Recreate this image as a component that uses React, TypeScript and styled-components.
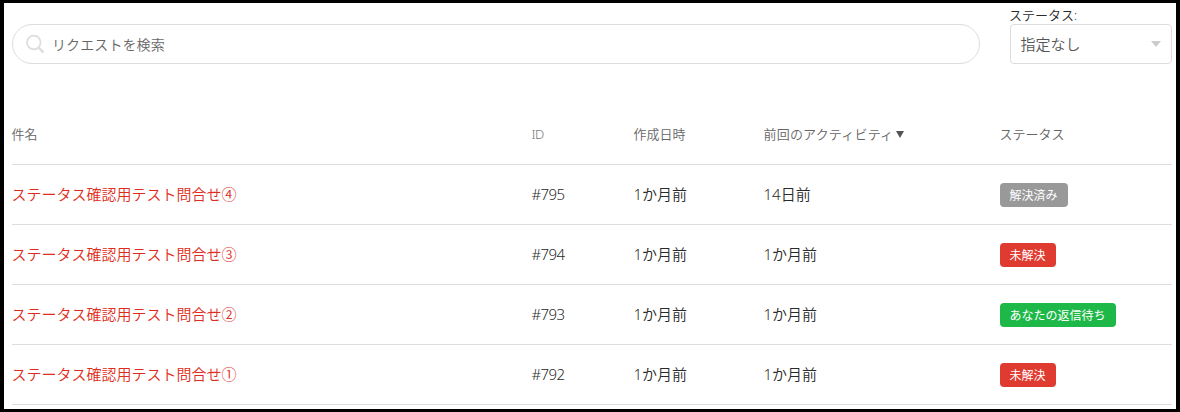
import React from "react";
import styled, { createGlobalStyle } from "styled-components";

const GlobalStyle = createGlobalStyle`
  *, *::before, *::after { box-sizing: border-box; }
  body {
    margin: 0;
    background: #fff;
    color: #2a2a2a;
    font-family: "Noto Sans", "Noto Sans CJK JP", sans-serif;
    font-size: 15px;
    font-weight: 350;
  }
`;

const Page = styled.main`
  height: 412px;
  overflow: hidden;
  border: solid #000;
  border-width: 3px 4px;
  padding: 3px 4px 0 8px;
`;

const Toolbar = styled.div`
  display: flex;
  align-items: flex-end;
  justify-content: space-between;
  height: 58px;
`;

const SearchBox = styled.label`
  display: flex;
  align-items: center;
  width: 968px;
  height: 40px;
  padding-left: 13px;
  border: 1px solid #ddd;
  border-radius: 20px;
`;

const SearchIcon = styled.svg`
  flex: none;
  width: 19px;
  height: 20px;
  margin-right: 7px;
`;

const SearchInput = styled.input`
  flex: 1;
  height: 36px;
  padding: 0;
  border: 0;
  outline: 0;
  background: transparent;
  font: 350 14px "Noto Sans CJK JP", sans-serif;
  letter-spacing: 0.1px;
  &::placeholder {
    color: #666;
    opacity: 1;
  }
`;

const Filter = styled.div`
  display: flex;
  flex-direction: column;
  width: 162px;
`;

const FilterLabel = styled.span`
  height: 18px;
  font-size: 13px;
  line-height: 18px;
  text-indent: -1px;
`;

const FilterButton = styled.button`
  display: flex;
  align-items: center;
  justify-content: space-between;
  height: 40px;
  padding: 0 10px 1px 9.5px;
  border: 1px solid #ddd;
  border-radius: 4px;
  background: #fff;
  color: #555;
  font: inherit;
`;

const Caret = styled.span`
  border: 5px solid transparent;
  border-top: 6px solid #ccc;
  border-bottom: 0;
`;

const Table = styled.table`
  width: 1160px;
  margin-top: 40px;
  border-collapse: separate;
  border-spacing: 0;
  table-layout: fixed;
`;

const Column = styled.col<{ $width: number }>`
  width: ${(p) => p.$width}px;
`;

const HeadCell = styled.th<{ $latin?: boolean; $spacing?: number }>`
  height: 61px;
  padding: 0;
  border-bottom: 1px solid #ddd;
  color: ${(p) => (p.$latin ? "#777" : "#666")};
  font-size: 13px;
  font-weight: ${(p) => (p.$latin ? 300 : 350)};
  letter-spacing: ${(p) => p.$spacing ?? 0}px;
  line-height: 20px;
  text-align: left;
  text-indent: -0.5px;
  white-space: nowrap;
`;

const SortArrow = styled.span`
  display: inline-block;
  margin-left: 3px;
  border: 4.5px solid transparent;
  border-top: 7px solid #555;
  border-bottom: 0;
  vertical-align: 1px;
`;

const Cell = styled.td<{ $tight?: boolean }>`
  height: 60px;
  padding: 0 0 2px;
  border-bottom: 1px solid #ddd;
  letter-spacing: ${(p) => (p.$tight ? "-0.6px" : "normal")};
  line-height: 20px;
  text-indent: -0.5px;
  white-space: nowrap;
`;

const StatusCell = styled(Cell)`
  padding-bottom: 0;
`;

const RequestLink = styled.a`
  color: #de2d20;
  font-family: "Noto Sans CJK JP", sans-serif;
  text-decoration: none;
`;

const badgeColors = { solved: "#999", open: "#e03b30", answered: "#1eb848" };
type Status = keyof typeof badgeColors;

const Badge = styled.span<{ $status: Status }>`
  display: block;
  width: fit-content;
  height: 24px;
  padding: 0 10.5px 0 10px;
  border-radius: 4px;
  background: ${(p) => badgeColors[p.$status]};
  color: #fff;
  font-size: 12px;
  font-weight: 400;
  line-height: 26px;
`;

const labels: Record<Status, string> = {
  solved: "解決済み",
  open: "未解決",
  answered: "あなたの返信待ち",
};

const requests: { title: string; id: string; created: string; active: string; status: Status }[] = [
  { title: "ステータス確認用テスト問合せ④", id: "#795", created: "1か月前", active: "14日前", status: "solved" },
  { title: "ステータス確認用テスト問合せ③", id: "#794", created: "1か月前", active: "1か月前", status: "open" },
  { title: "ステータス確認用テスト問合せ②", id: "#793", created: "1か月前", active: "1か月前", status: "answered" },
  { title: "ステータス確認用テスト問合せ①", id: "#792", created: "1か月前", active: "1か月前", status: "open" },
];

export default function App() {
  return (
    <Page>
      <GlobalStyle />
      <Toolbar>
        <SearchBox>
          <SearchIcon viewBox="0 0 19 20" fill="none" stroke="#ddd" strokeWidth="1.8">
            <circle cx="7.8" cy="8.5" r="6.8" />
            <path d="M12.4 13.4 17.6 18.6" strokeWidth="2.2" />
          </SearchIcon>
          <SearchInput placeholder="リクエストを検索" />
        </SearchBox>
        <Filter>
          <FilterLabel>ステータス:</FilterLabel>
          <FilterButton>
            指定なし
            <Caret />
          </FilterButton>
        </Filter>
      </Toolbar>
      <Table>
        <colgroup>
          <Column $width={520} />
          <Column $width={102} />
          <Column $width={130} />
          <Column $width={236} />
          <Column $width={172} />
        </colgroup>
        <thead>
          <tr>
            <HeadCell>件名</HeadCell>
            <HeadCell $latin $spacing={-0.5}>ID</HeadCell>
            <HeadCell>作成日時</HeadCell>
            <HeadCell $spacing={0.2}>
              前回のアクティビティ
              <SortArrow />
            </HeadCell>
            <HeadCell>ステータス</HeadCell>
          </tr>
        </thead>
        <tbody>
          {requests.map((r) => (
            <tr key={r.id}>
              <Cell>
                <RequestLink href="#">{r.title}</RequestLink>
              </Cell>
              <Cell $tight>{r.id}</Cell>
              <Cell>{r.created}</Cell>
              <Cell>{r.active}</Cell>
              <StatusCell>
                <Badge $status={r.status}>{labels[r.status]}</Badge>
              </StatusCell>
            </tr>
          ))}
        </tbody>
      </Table>
    </Page>
  );
}
